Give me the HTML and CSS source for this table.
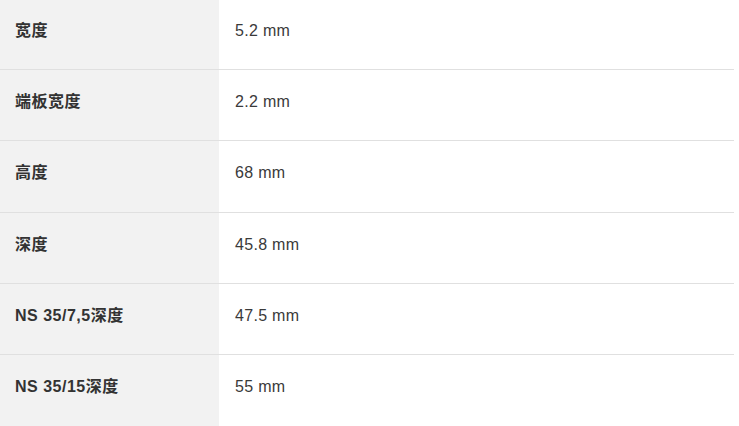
FILE: index.html
```html
<!DOCTYPE html>
<html lang="zh">
<head>
<meta charset="utf-8">
<link rel="stylesheet" href="styles.css">
</head>
<body>
<div class="specs">
  <div class="row"><div class="label">宽度</div><div class="value">5.2 mm</div></div>
  <div class="row"><div class="label">端板宽度</div><div class="value">2.2 mm</div></div>
  <div class="row"><div class="label">高度</div><div class="value">68 mm</div></div>
  <div class="row"><div class="label">深度</div><div class="value">45.8 mm</div></div>
  <div class="row"><div class="label">NS 35/7,5深度</div><div class="value">47.5 mm</div></div>
  <div class="row"><div class="label">NS 35/15深度</div><div class="value">55 mm</div></div>
</div>
</body>
</html>
```
FILE: styles.css
```css
html, body {
  margin: 0;
  padding: 0;
  background: #fff;
}
body {
  font-family: "Liberation Sans", Arial, "Noto Sans CJK SC", sans-serif;
  font-size: 16px;
  line-height: 24px;
  color: #333;
  overflow: hidden;
}
.specs {
  width: 734px;
  margin-top: -1.25px;
}
.row {
  display: grid;
  grid-template-columns: 219px 1fr;
  border-bottom: 1px solid #e0e0e0;
}
.row:last-child {
  border-bottom: none;
}
.label, .value {
  padding: 20px 15px 26.25px;
}
.row:last-child .label,
.row:last-child .value {
  padding-bottom: 30px;
}
.label {
  background: #f2f2f2;
  font-weight: bold;
  letter-spacing: 0.5px;
}
.value {
  padding-left: 16px;
  letter-spacing: 0.3px;
  color: #3a3a3a;
}
```
